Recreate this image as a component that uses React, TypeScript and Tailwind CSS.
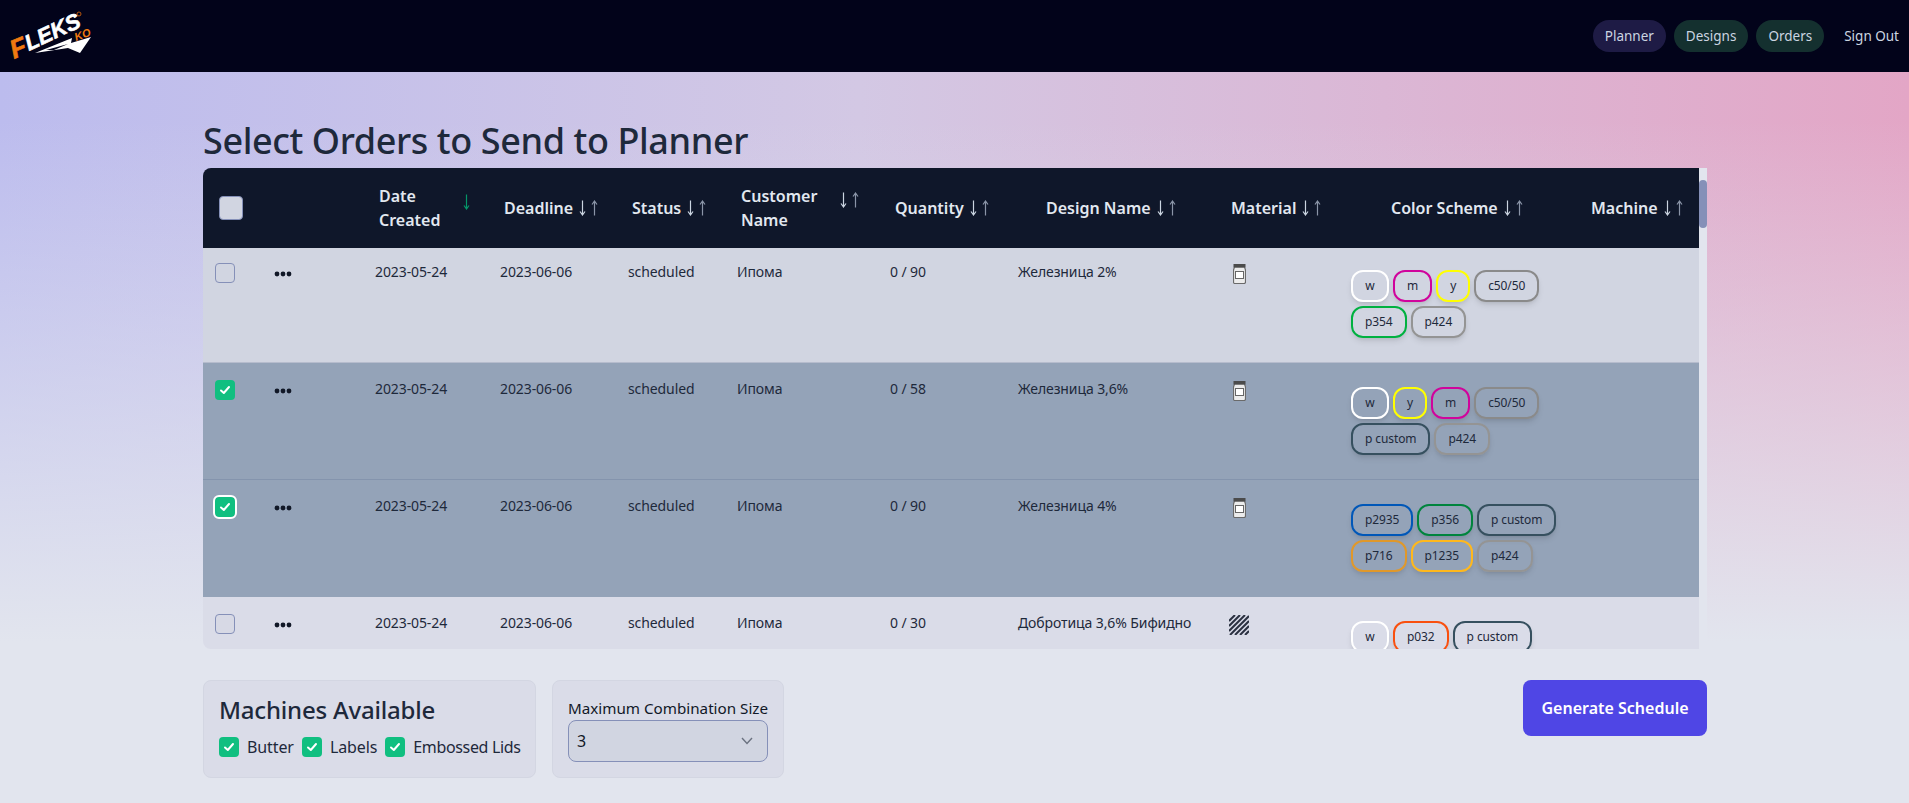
const columns = 'grid grid-cols-[59px_101px_125px_128px_109px_153px_128px_213px_120px_240px_120px]'

const rows = [
  {
    qty: '0 / 90',
    design: 'Железница 2%',
    material: 'jar',
    selected: 0,
    bg: 'bg-[#d1d5e1] border-[#b6bccd]',
    colors: [['w', 'border-white'], ['m', 'border-[#d0049c]'], ['y', 'border-[#ffff00]'], ['c50/50', 'border-[#8a8a8a]'], ['p354', 'border-[#00b140]'], ['p424', 'border-[#949494]']],
  },
  {
    qty: '0 / 58',
    design: 'Железница 3,6%',
    material: 'jar',
    selected: 1,
    bg: 'bg-[#94a3b8] border-[#8494ad]',
    colors: [['w', 'border-white'], ['y', 'border-[#ffff00]'], ['m', 'border-[#d0049c]'], ['c50/50', 'border-[#8a8a8a]'], ['p custom', 'border-[#36505f]'], ['p424', 'border-[#949494]']],
  },
  {
    qty: '0 / 90',
    design: 'Железница 4%',
    material: 'jar',
    selected: 2,
    bg: 'bg-[#94a3b8] border-[#94a3b8]',
    colors: [['p2935', 'border-[#0057b8]'], ['p356', 'border-[#00843d]'], ['p custom', 'border-[#36505f]'], ['p716', 'border-[#e0982a]'], ['p1235', 'border-[#ffb81c]'], ['p424', 'border-[#949494]']],
  },
  {
    qty: '0 / 30',
    design: 'Добротица 3,6% Бифидно',
    material: 'stripes',
    selected: 0,
    bg: 'bg-[#dadce8] border-[#dadce8]',
    colors: [['w', 'border-white'], ['p032', 'border-[#f9500f]'], ['p custom', 'border-[#36505f]']],
  },
]

function Logo() {
  return (
    <svg width="100" height="66" viewBox="0 0 100 66" className="-ml-2">
      <g fontFamily="'Liberation Sans', sans-serif" fontWeight="700" fontStyle="italic">
        <text x="14" y="59" fontSize="26" fill="#f07a10" stroke="#f07a10" strokeWidth="0.6" transform="rotate(-22 14 59)">F</text>
        <text x="29" y="51" fontSize="22" fill="#ffffff" stroke="#ffffff" strokeWidth="0.6" transform="rotate(-25 29 51)">LEKS</text>
        <text x="76" y="41" fontSize="11" fill="#f07a10" transform="rotate(-20 76 41)">KO</text>
      </g>
      <circle cx="79" cy="14" r="2" fill="none" stroke="#b9560c" strokeWidth="1" />
      <path d="M35 53 L72 38 L71 43 L91 37 L80 53 L68 48 Z" fill="#ffffff" />
      <path d="M46 50 L68 44 L54 50 Z" fill="#02031a" />
    </svg>
  )
}

function ArrowDown({ color }: { color: string }) {
  return (
    <svg width="7" height="16" viewBox="0 0 7 16" className="shrink-0">
      <path d="M3.5 0.5 V14.5 M1 11.5 L3.5 15 L6 11.5" fill="none" stroke={color} strokeWidth="1.2" />
    </svg>
  )
}

function ArrowUp({ color }: { color: string }) {
  return (
    <svg width="7" height="16" viewBox="0 0 7 16" className="shrink-0">
      <path d="M3.5 15.5 V1.5 M1 4.5 L3.5 1 L6 4.5" fill="none" stroke={color} strokeWidth="1.2" />
    </svg>
  )
}

function Arrows() {
  return (
    <span className="ml-[6px] inline-flex gap-[5px]">
      <ArrowDown color="#cbd5e1" />
      <ArrowUp color="#8b95a8" />
    </span>
  )
}

function Head({ label, className }: { label: string; className: string }) {
  return (
    <div className={`flex items-center text-[16px] font-semibold text-[#e2e8f0] ${className}`}>
      {label}
      <Arrows />
    </div>
  )
}

function Box({ checked, ring }: { checked?: boolean; ring?: boolean }) {
  if (!checked) return <div className="w-5 h-5 rounded bg-[#d1d5e1]/40 border border-[#8590b8]" />
  return (
    <div className={`w-5 h-5 shrink-0 rounded bg-[#10bf80] flex items-center justify-center ${ring ? 'outline-2 outline-white' : ''}`}>
      <svg width="12" height="12" viewBox="0 0 12 12">
        <path d="M2 6.5 L4.8 9 L10 3" fill="none" stroke="#ffffff" strokeWidth="2" strokeLinecap="round" strokeLinejoin="round" />
      </svg>
    </div>
  )
}

function Jar() {
  return (
    <svg width="13" height="20" viewBox="0 0 13 20" className="ml-[2px] mt-[18px]">
      <path d="M1.5 3 H11.5 L12.5 6 V18 Q12.5 19.5 11 19.5 H2 Q0.5 19.5 0.5 18 V6 Z" fill="#ececec" stroke="#6a6a6a" strokeWidth="1.2" />
      <rect x="0.5" y="0" width="12" height="3.5" fill="#4b4b4b" />
      <rect x="2.5" y="7.5" width="8" height="7" fill="#ffffff" stroke="#666666" />
    </svg>
  )
}

function Stripes() {
  return (
    <svg width="20" height="20" viewBox="0 0 20 20" className="mt-[18px] -ml-[2px]">
      <g stroke="#2a3040" strokeWidth="2">
        <path d="M0 6 L6 0" />
        <path d="M0 11 L11 0" />
        <path d="M0 16 L16 0" />
        <path d="M1 20 L20 1" />
        <path d="M6 20 L20 6" />
        <path d="M11 20 L20 11" />
        <path d="M16 20 L20 16" />
      </g>
    </svg>
  )
}

function Chip({ label, border }: { label: string; border: string }) {
  return (
    <span className={`h-8 px-3 flex items-center justify-center rounded-xl border-2 text-[12px] tracking-[-0.1px] shadow-md ${label === 'w' ? 'min-w-[38px]' : ''} ${border}`}>{label}</span>
  )
}

function OrderRow({ row }: { row: (typeof rows)[number] }) {
  return (
    <div className={`${columns} h-[117px] border-b text-[14px] tracking-[-0.1px] text-[#1e293b] ${row.bg}`}>
      <div className="pl-3 pt-[17px]">
        <Box checked={row.selected > 0} ring={row.selected === 2} />
      </div>
      <div className="pl-3 pt-[25px]">
        <svg width="18" height="6" viewBox="0 0 18 6">
          <circle cx="3" cy="3" r="2.4" fill="#111827" />
          <circle cx="9" cy="3" r="2.4" fill="#111827" />
          <circle cx="15" cy="3" r="2.4" fill="#111827" />
        </svg>
      </div>
      <div className="pl-3 pt-[15px]">2023-05-24</div>
      <div className="pl-3 pt-[15px]">2023-06-06</div>
      <div className="pl-3 pt-[15px]">scheduled</div>
      <div className="pl-3 pt-[15px]">Ипома</div>
      <div className="pl-3 pt-[15px]">{row.qty}</div>
      <div className="pl-3 pt-[15px]">{row.design}</div>
      <div className="pl-3">{row.material === 'jar' ? <Jar /> : <Stripes />}</div>
      <div className="pl-3 pt-[24px] w-[240px]">
        <div className="flex flex-wrap gap-1">
          {row.colors.map(([label, border], i) => (
            <Chip key={i} label={label} border={border} />
          ))}
        </div>
      </div>
      <div />
    </div>
  )
}

export default function App() {
  return (
    <div className="min-h-[803px] font-['Noto_Sans',sans-serif] bg-[linear-gradient(to_bottom,transparent_15%,#e2e5ee_80%),linear-gradient(to_right,#bcbcee,#d3c8e4_45%,#e3a6c6)]">
      <nav className="h-[72px] bg-[#02031a] flex items-start justify-between pl-2 pr-[10px]">
        <Logo />
        <div className="flex items-center gap-2 pt-5 text-[13.5px] text-[#cbd5e1]">
          <a className="h-8 px-3 flex items-center rounded-full bg-[#1e1b45]">Planner</a>
          <a className="h-8 px-3 flex items-center rounded-full bg-[#14302f]">Designs</a>
          <a className="h-8 px-3 flex items-center rounded-full bg-[#14302f]">Orders</a>
          <a className="ml-3 h-8 flex items-center">Sign Out</a>
        </div>
      </nav>

      <main className="w-[1504px] ml-[203px]">
        <h1 className="pt-[44px] h-[96px] text-[36px] leading-[50px] font-medium tracking-[-0.4px] text-[#1e293b]">Select Orders to Send to Planner</h1>

        <div className="flex h-[481px]">
          <div className="w-[1496px] rounded-l-lg overflow-hidden">
            <div className={`${columns} h-20 bg-[#0f172a] items-center`}>
              <div className="pl-4">
                <div className="w-6 h-6 rounded bg-[#d1d5e1] border border-[#8590b8]" />
              </div>
              <div />
              <div className="pl-4 flex items-start text-[16px] font-semibold leading-6 text-[#e2e8f0]">
                <span className="w-[84px]">Date Created</span>
                <span className="mt-[10px]">
                  <ArrowDown color="#059669" />
                </span>
              </div>
              <Head label="Deadline" className="pl-4" />
              <Head label="Status" className="pl-4" />
              <div className="pl-4 flex items-start text-[16px] font-semibold leading-6 text-[#e2e8f0]">
                <span className="w-[93px]">Customer Name</span>
                <span className="mt-[8px] flex">
                  <Arrows />
                </span>
              </div>
              <Head label="Quantity" className="pl-[17px]" />
              <Head label="Design Name" className="pl-[40px]" />
              <Head label="Material" className="pl-3" />
              <Head label="Color Scheme" className="pl-[52px]" />
              <Head label="Machine" className="pl-3" />
            </div>
            <div className="h-[401px] overflow-hidden">
              <div className="-mt-[2px]">
                {rows.map((row, i) => (
                  <OrderRow key={i} row={row} />
                ))}
              </div>
            </div>
          </div>
          <div className="w-2 bg-[#e2e5ee] pt-3">
            <div className="h-12 rounded bg-[#8590b8]" />
          </div>
        </div>

        <div className="flex items-start mt-[31px] gap-4">
          <section className="w-[333px] h-[98px] rounded-lg border border-[#d3d6e2] bg-[#dadce8] pl-[15px] pt-[13px]">
            <h2 className="text-[24px] leading-8 font-medium tracking-[-0.2px] text-[#1e293b]">Machines Available</h2>
            <div className="flex items-center whitespace-nowrap text-[16px] tracking-[-0.1px] text-[#1e293b] mt-[9px]">
              <Box checked />
              <span className="ml-2 mr-2">Butter</span>
              <Box checked />
              <span className="ml-2 mr-2">Labels</span>
              <Box checked />
              <span className="ml-2 tracking-[-0.35px]">Embossed Lids</span>
            </div>
          </section>
          <section className="w-[232px] h-[98px] rounded-lg border border-[#d3d6e2] bg-[#dadce8] pl-[15px] pt-[17px]">
            <div className="text-[15.2px] leading-5 text-[#111827] whitespace-nowrap">Maximum Combination Size</div>
            <div className="mt-[2px] w-[200px] h-[42px] rounded-lg border border-[#8590b8] bg-[#d1d5e1] flex items-center justify-between pl-[8px] pr-[14px] text-[16px] text-[#111827]">
              3
              <svg width="12" height="8" viewBox="0 0 12 8">
                <path d="M1 1 L6 6.5 L11 1" fill="none" stroke="#6b7280" strokeWidth="1.4" />
              </svg>
            </div>
          </section>
          <button className="ml-auto w-[184px] h-14 rounded-lg bg-[#4f46e5] text-white text-[16px] font-semibold">Generate Schedule</button>
        </div>
      </main>
    </div>
  )
}
